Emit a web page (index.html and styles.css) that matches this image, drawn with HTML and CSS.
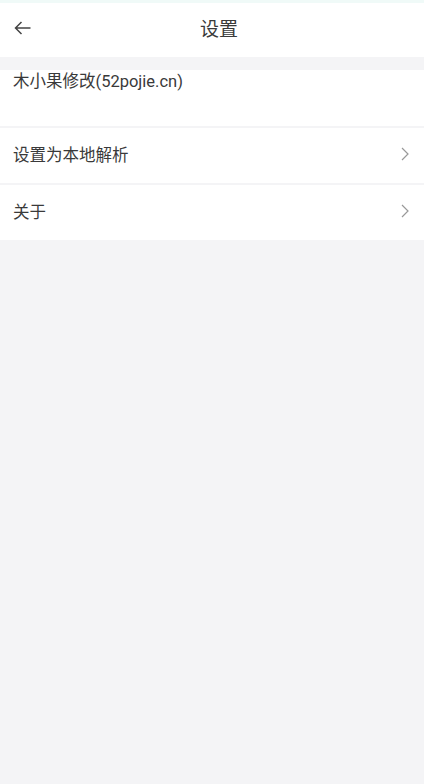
FILE: index.html
```html
<!DOCTYPE html>
<html lang="zh">
<head>
  <meta charset="UTF-8" />
  <meta name="viewport" content="width=device-width, initial-scale=1.0" />
  <title>设置</title>
  <link rel="stylesheet" href="styles.css">
</head>
<body>
  <div class="status"></div>
  <header class="topbar">
    <svg class="back" width="17" height="14" viewBox="0 0 17 14">
      <path d="M16.5 7H1.5M7.5 1L1.5 7L7.5 13" fill="none" stroke="#444" stroke-width="1.5"/>
    </svg>
    <h1>设置</h1>
  </header>

  <div class="list">
    <div class="item item-info">木小果修改(52pojie.cn)</div>
    <div class="item">
      <span>设置为本地解析</span>
      <svg class="chev" width="8" height="14" viewBox="0 0 8 14">
        <path d="M1 1l6 6-6 6" fill="none" stroke="#999" stroke-width="1.2"/>
      </svg>
    </div>
    <div class="item">
      <span>关于</span>
      <svg class="chev" width="8" height="14" viewBox="0 0 8 14">
        <path d="M1 1l6 6-6 6" fill="none" stroke="#999" stroke-width="1.2"/>
      </svg>
    </div>
  </div>
</body>
</html>
```

FILE: styles.css
```css
body {
  margin: 0;
  background-color: #f4f4f6;
  font-family: Roboto, "Noto Sans CJK SC", sans-serif;
  color: #3a3a3a;
  height: 784px;
}
.status {
  height: 3px;
  background-color: #f0faf8;
}
.topbar {
  height: 54px;
  box-sizing: border-box;
  padding: 0 0 5px 14px;
  background-color: white;
  display: flex;
  align-items: center;
  justify-content: center;
  position: relative;
}
.back {
  position: absolute;
  left: 14px;
  top: 18px;
}
.topbar h1 {
  margin: 0;
  font-size: 19px;
  font-weight: normal;
  color: #3a3a3a;
}
.list {
  margin-top: 13px;
  display: flex;
  flex-direction: column;
  gap: 2px;
}
.item {
  height: 55px;
  box-sizing: border-box;
  background-color: white;
  padding: 0 15px 4px 13px;
  display: flex;
  align-items: center;
  justify-content: space-between;
  font-size: 16.5px;
}
.item-info {
  height: 56px;
  align-items: flex-start;
  padding-bottom: 0;
  line-height: 24px;
}
.chev {
  display: block;
}
```
